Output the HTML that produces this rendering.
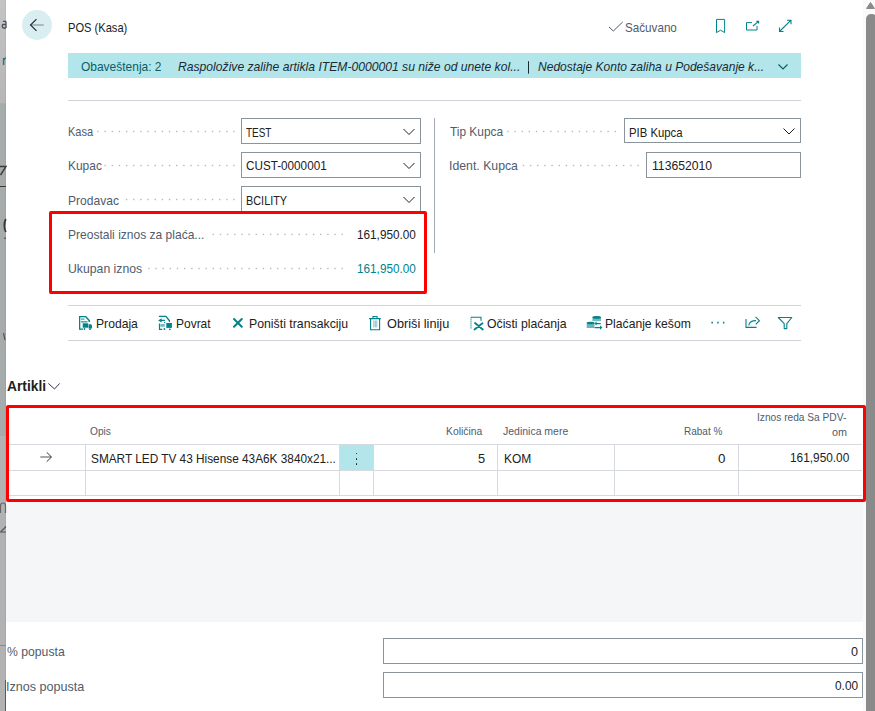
<!DOCTYPE html>
<html><head><meta charset="utf-8">
<style>
html,body{margin:0;padding:0;}
body{width:875px;height:711px;overflow:hidden;position:relative;background:#fff;font-family:"Liberation Sans",sans-serif;color:#212121;}
.a{position:absolute;}
.t{position:absolute;white-space:nowrap;line-height:20px;transform-origin:0 0;}
.inp{position:absolute;box-sizing:border-box;border:1px solid #8a949c;background:#fff;}
.hl{position:absolute;height:1px;}
.vl{position:absolute;width:1px;}
.red{position:absolute;box-sizing:border-box;border:3px solid #ff0000;border-radius:2px;}
</style></head><body>

<!-- left overlay strip -->
<div class="a" style="left:0;top:0;width:6px;height:104px;background:linear-gradient(#c4c4c4,#b6b6b6)"></div>
<div class="a" style="left:0;top:103px;width:6px;height:1px;background:#acacac"></div>
<div class="a" style="left:0;top:104px;width:6px;height:332px;background:#a6acac"></div>
<div class="a" style="left:0;top:436px;width:6px;height:275px;background:#b2b2b2"></div>
<div class="a" style="left:5px;top:0;width:1px;height:711px;background:rgba(0,0,0,0.05)"></div>
<div class="a" style="left:0;top:186px;width:6px;height:1px;background:#3a3a3a"></div>
<div class="a" style="left:0;top:645px;width:6px;height:1px;background:#8a8a8a"></div>
<div class="a" style="left:5px;top:680px;width:1px;height:31px;background:#2b6f73"></div>
<!-- scrollbar -->
<div class="a" style="left:863px;top:0;width:12px;height:711px;background:#fafafa"></div>
<div class="a" style="left:866px;top:14px;width:11px;height:700px;background:#8a8a8a;border-radius:5px 5px 0 0"></div>

<!-- header -->
<div class="a" style="left:22px;top:10px;width:30px;height:30px;border-radius:50%;background:#d8eef0"></div>

<!-- notification bar -->
<div class="a" style="left:68px;top:53px;width:733px;height:25px;background:#b3e6ea"></div>
<div class="hl" style="left:68px;top:100px;width:733px;background:#d0d3d7"></div>

<!-- left form -->
<div class="inp" style="left:241px;top:118px;width:180px;height:26px"></div>
<div class="inp" style="left:241px;top:152px;width:180px;height:26px"></div>
<div class="inp" style="left:241px;top:186px;width:180px;height:26px"></div>
<div class="vl" style="left:434px;top:118px;height:135px;background:#a4abb2"></div>
<!-- right form -->
<div class="inp" style="left:624px;top:118px;width:177px;height:25px"></div>
<div class="inp" style="left:646px;top:152px;width:155px;height:26px"></div>

<div class="red" style="left:49px;top:211px;width:378px;height:83px"></div>

<!-- action bar -->
<div class="hl" style="left:68px;top:305px;width:733px;background:#d0d3d7"></div>
<div class="hl" style="left:68px;top:340px;width:733px;background:#d0d3d7"></div>

<!-- table -->
<div class="a" style="left:340px;top:445px;width:33px;height:25px;background:#b3e6ea"></div>
<div class="hl" style="left:9px;top:444px;width:853px;background:#d6d9dd"></div>
<div class="hl" style="left:9px;top:470px;width:853px;background:#d6d9dd"></div>
<div class="hl" style="left:9px;top:495px;width:853px;background:#d6d9dd"></div>
<div class="vl" style="left:85px;top:444px;height:51px;background:#d6d9dd"></div>
<div class="vl" style="left:339px;top:444px;height:51px;background:#d6d9dd"></div>
<div class="vl" style="left:373px;top:444px;height:51px;background:#d6d9dd"></div>
<div class="vl" style="left:497px;top:444px;height:51px;background:#d6d9dd"></div>
<div class="vl" style="left:614px;top:444px;height:51px;background:#d6d9dd"></div>
<div class="vl" style="left:738px;top:444px;height:51px;background:#d6d9dd"></div>
<div class="a" style="left:355.6px;top:452.6px;width:1.7px;height:1.7px;background:#1a1a1a;border-radius:50%"></div>
<div class="a" style="left:355.6px;top:458px;width:1.7px;height:1.7px;background:#1a1a1a;border-radius:50%"></div>
<div class="a" style="left:355.6px;top:463.3px;width:1.7px;height:1.7px;background:#1a1a1a;border-radius:50%"></div>
<div class="red" style="left:6px;top:405px;width:860px;height:97px"></div>

<!-- grey area -->
<div class="a" style="left:6px;top:502px;width:857px;height:120px;background:#f5f6f7"></div>

<!-- bottom fields -->
<div class="inp" style="left:383px;top:638px;width:480px;height:26px"></div>
<div class="inp" style="left:383px;top:672px;width:480px;height:26px"></div>

<div class="t" style="left:68.00px;top:18.00px;font-size:13px;color:#212121;transform:scaleX(0.8551);">POS (Kasa)</div>
<div class="t" style="left:624.70px;top:17.50px;font-size:13px;color:#505c6d;transform:scaleX(0.8966);">Sačuvano</div>
<div class="t" style="left:80.60px;top:57.00px;font-size:13px;color:#0b5d66;transform:scaleX(0.9205);">Obaveštenja: 2</div>
<div class="t" style="left:177.70px;top:57.00px;font-size:13px;color:#1b2a35;font-style:italic;transform:scaleX(0.9342);">Raspoložive zalihe artikla ITEM-0000001 su niže od unete kol...</div>
<div class="t" style="left:537.50px;top:57.00px;font-size:13px;color:#1b2a35;font-style:italic;transform:scaleX(0.9259);">Nedostaje Konto zaliha u Podešavanje k...</div>
<div class="t" style="left:68.00px;top:122.00px;font-size:13px;color:#505c6d;transform:scaleX(0.8467);">Kasa</div>
<div class="t" style="left:246.00px;top:123.00px;font-size:13px;color:#212121;transform:scaleX(0.7647);">TEST</div>
<div class="t" style="left:68.00px;top:156.00px;font-size:13px;color:#505c6d;transform:scaleX(0.9189);">Kupac</div>
<div class="t" style="left:246.00px;top:156.00px;font-size:13px;color:#212121;transform:scaleX(0.9000);">CUST-0000001</div>
<div class="t" style="left:68.00px;top:190.60px;font-size:13px;color:#505c6d;transform:scaleX(0.9273);">Prodavac</div>
<div class="t" style="left:246.00px;top:190.60px;font-size:13px;color:#212121;transform:scaleX(0.8367);">BCILITY</div>
<div class="t" style="left:68.00px;top:225.00px;font-size:13px;color:#505c6d;transform:scaleX(0.9252);">Preostali iznos za plaća...</div>
<div class="t" style="left:357.20px;top:225.00px;font-size:13px;color:#212121;transform:scaleX(0.9046);">161,950.00</div>
<div class="t" style="left:68.00px;top:259.00px;font-size:13px;color:#505c6d;transform:scaleX(0.9418);">Ukupan iznos</div>
<div class="t" style="left:357.20px;top:259.00px;font-size:13px;color:#00838a;transform:scaleX(0.9046);">161,950.00</div>
<div class="t" style="left:449.60px;top:122.00px;font-size:13px;color:#505c6d;transform:scaleX(0.9138);">Tip Kupca</div>
<div class="t" style="left:628.70px;top:123.00px;font-size:13px;color:#212121;transform:scaleX(0.8710);">PIB Kupca</div>
<div class="t" style="left:448.66px;top:156.00px;font-size:13px;color:#505c6d;transform:scaleX(0.9444);">Ident. Kupca</div>
<div class="t" style="left:651.80px;top:156.00px;font-size:13px;color:#212121;transform:scaleX(0.9375);">113652010</div>
<div class="t" style="left:96.00px;top:313.80px;font-size:13px;color:#212121;transform:scaleX(0.9333);">Prodaja</div>
<div class="t" style="left:176.00px;top:313.80px;font-size:13px;color:#212121;transform:scaleX(0.9211);">Povrat</div>
<div class="t" style="left:249.10px;top:313.80px;font-size:13px;color:#212121;transform:scaleX(0.9457);">Poništi transakciju</div>
<div class="t" style="left:386.80px;top:313.80px;font-size:13px;color:#212121;transform:scaleX(0.9794);">Obriši liniju</div>
<div class="t" style="left:487.20px;top:313.80px;font-size:13px;color:#212121;transform:scaleX(0.9412);">Očisti plaćanja</div>
<div class="t" style="left:604.80px;top:313.80px;font-size:13px;color:#212121;transform:scaleX(0.9348);">Plaćanje kešom</div>
<div class="t" style="left:6.90px;top:375.70px;font-size:14px;color:#212121;font-weight:bold;transform:scaleX(0.9846);">Artikli</div>
<div class="t" style="left:90.30px;top:420.50px;font-size:11px;color:#505c6d;transform:scaleX(0.9217);">Opis</div>
<div class="t" style="left:446.20px;top:420.50px;font-size:11px;color:#505c6d;transform:scaleX(0.9410);">Količina</div>
<div class="t" style="left:502.70px;top:420.50px;font-size:11px;color:#505c6d;transform:scaleX(0.9529);">Jedinica mere</div>
<div class="t" style="left:684.40px;top:420.50px;font-size:11px;color:#505c6d;transform:scaleX(0.9093);">Rabat %</div>
<div class="t" style="left:757.20px;top:407.00px;font-size:11px;color:#505c6d;transform:scaleX(0.9247);">Iznos reda Sa PDV-</div>
<div class="t" style="left:832.30px;top:421.80px;font-size:11px;color:#505c6d;transform:scaleX(0.9800);">om</div>
<div class="t" style="left:91.00px;top:449.00px;font-size:13px;color:#212121;transform:scaleX(0.9086);">SMART LED TV 43 Hisense 43A6K 3840x21...</div>
<div class="t" style="left:477.70px;top:449.00px;font-size:13px;color:#212121;transform:scaleX(0.9857);">5</div>
<div class="t" style="left:504.10px;top:449.00px;font-size:13px;color:#212121;transform:scaleX(0.9207);">KOM</div>
<div class="t" style="left:718.40px;top:449.00px;font-size:13px;color:#212121;transform:scaleX(1.0286);">0</div>
<div class="t" style="left:790.20px;top:448.00px;font-size:13px;color:#212121;transform:scaleX(0.9108);">161,950.00</div>
<div class="t" style="left:6.90px;top:642.00px;font-size:13px;color:#505c6d;transform:scaleX(0.9387);">% popusta</div>
<div class="t" style="left:5.94px;top:677.00px;font-size:13px;color:#505c6d;transform:scaleX(0.9650);">Iznos popusta</div>
<div class="t" style="left:851.30px;top:641.80px;font-size:13px;color:#212121;transform:scaleX(0.9714);">0</div>
<div class="t" style="left:835.20px;top:675.60px;font-size:13px;color:#212121;transform:scaleX(0.9120);">0.00</div>

<svg class="a" style="left:0;top:0" width="875" height="711" viewBox="0 0 875 711">
<!-- scrollbar arrow -->
<path d="M870.5 2.5L874.5 8.5H866.5Z" fill="#8a8a8a" stroke="#8a8a8a" stroke-linejoin="round"/>
<g fill="none" stroke-linecap="butt">
<!-- back arrow -->
<path d="M30.5 25H43.8" stroke="#8a969c" stroke-width="1.2"/>
<path d="M36.5 19.2L30.5 25L36.5 30.8" stroke="#1c2834" stroke-width="1.1"/>
<!-- check -->
<path d="M609 27L613.3 31L622.7 22" stroke="#505c6d" stroke-width="1"/>
<!-- bookmark -->
<path d="M716.5 19.4H724.6V32.6L720.6 30.2L716.5 32.6Z" stroke="#00838a" stroke-width="1"/>
<!-- popout -->
<path d="M752 22.6H746.5V30H757V25.8" stroke="#00838a" stroke-width="1"/>
<path d="M753 26L758.6 21.4M756.4 21.4H758.6V23.6" stroke="#00838a" stroke-width="1.1"/>
<!-- expand -->
<path d="M779.5 31.5L791 20.2M787 20.2H791V24.2M779.5 27.5V31.5H783.5" stroke="#00838a" stroke-width="1.1"/>
<path d="M528.5 61.2V73.7" stroke="#1b2a35" stroke-width="1"/>
<!-- notification chevron -->
<path d="M778.5 64.5L783 69L787.5 64.5" stroke="#0b5d66" stroke-width="1.2"/>
<!-- input chevrons -->
<path d="M403.5 129L409 134.5L414.5 129M403.5 163L409 168.5L414.5 163M403.5 197L409 202.5L414.5 197M783.5 128.5L789 134L794.5 128.5" stroke="#1a2028" stroke-width="1"/>
<!-- artikli chevron -->
<path d="M48.3 383.4L54.5 389L59.7 383.4" stroke="#2e3c4a" stroke-width="1"/>
<!-- row arrow -->
<path d="M40.3 457H51.3" stroke="#707070" stroke-width="1.2"/>
<path d="M46.7 452.3L51.5 457L46.7 461.7" stroke="#3a3030" stroke-width="1"/>
</g>
<!-- action bar icons -->
<g fill="#00838a" stroke="none">
<!-- Prodaja: doc + truck -->
<path d="M79 316H86L90 320.3V322H88.6V321L85.3 317.3H80.3V328.5H83V329.8H79Z"/>
<rect x="81" y="318.3" width="3.5" height="1.6" opacity="0.6"/>
<rect x="81" y="321.3" width="6.5" height="1.1"/>
<rect x="82.7" y="323.3" width="5.5" height="4.4"/>
<path d="M88.6 324.2H91.2L92 325.5V328.4H88.6Z"/>
<circle cx="84.5" cy="329" r="0.9"/><circle cx="90" cy="329.2" r="0.9"/>
<!-- Povrat: doc + arrow + truck -->
<path d="M158.9 315.8H166.2L170 320.3V322H168.8V321L165.6 317H158.9Z"/>
<path d="M158.1 320.4L161.6 318.2V319.8H164.9V321H161.6V322.6Z"/>
<rect x="164.1" y="321.9" width="1.1" height="1.1"/>
<path d="M158.9 323.4H160.1V328.8H162.2V330H158.9Z"/>
<rect x="160.4" y="324" width="4.4" height="2.8" opacity="0.55"/>
<rect x="166.3" y="323" width="5.6" height="4.9"/>
<circle cx="164.4" cy="329" r="0.9"/><circle cx="169.9" cy="329.3" r="0.9"/>
</g>
<g fill="none" stroke="#00838a">
<!-- X -->
<path d="M234 319L241.8 326.8M241.8 319L234 326.8" stroke-width="2" stroke-linecap="round"/>
<!-- trash -->
<path d="M369.1 318.6H380.8M373 318.3V316.5H377V318.3M370.6 318.6V329.8H379.6V318.6" stroke-width="1.1"/>
<path d="M373.8 320.4V327.4M375.3 320.4V327.4M376.8 320.4V327.4" stroke-width="0.9" opacity="0.55"/>
<!-- ocisti -->
<path d="M471 317.3H481V320.7" stroke-width="1.1"/><path d="M471 317.3V328.8" stroke-width="1.2" stroke-dasharray="1.3 0.7" opacity="0.8"/>
<path d="M475 323L482.8 329.5M482.5 323.2L474.5 329.5" stroke-width="1.8" stroke-linecap="round"/>
<!-- dots menu -->
<path d="M711.4 322.6H712.9M717.2 322.6H718.7M722.9 322.6H724.4" stroke-width="1.6"/>
<!-- share -->
<path d="M746 318.9V327.4H756.6" stroke-width="1.1"/>
<path d="M748.7 325.5C749.5 321.5 752.5 320.6 756 320.6M755.6 316.8L759.4 320.7L755.8 324.3" stroke-width="1.1"/>
<!-- filter -->
<path d="M778.3 317.5H791.8L786.8 323.6V328.6H784.2V323.6Z" stroke-width="1.1" stroke-linejoin="round"/>
</g>
<g fill="#00838a">
<!-- cash -->
<ellipse cx="596.7" cy="317.4" rx="4.3" ry="1.3"/>
<rect x="592.4" y="317.4" width="8.6" height="3.8" opacity="0.55"/>
<ellipse cx="590.6" cy="323" rx="3.9" ry="1.2"/>
<rect x="586.7" y="323" width="7.8" height="5" opacity="0.6"/>
<path d="M594.3 323.6L596.6 321.6V323H600.8V324.3H596.6V325.6Z"/>
<path d="M602.4 327.6L600 329.8V328.3H594.6V326.9H600V325.4Z"/>
</g>
<g fill="#b4b9c0"><rect x="233.30" y="130.80" width="1.4" height="1.4"/><rect x="226.14" y="130.80" width="1.4" height="1.4"/><rect x="218.98" y="130.80" width="1.4" height="1.4"/><rect x="211.82" y="130.80" width="1.4" height="1.4"/><rect x="204.66" y="130.80" width="1.4" height="1.4"/><rect x="197.50" y="130.80" width="1.4" height="1.4"/><rect x="190.34" y="130.80" width="1.4" height="1.4"/><rect x="183.18" y="130.80" width="1.4" height="1.4"/><rect x="176.02" y="130.80" width="1.4" height="1.4"/><rect x="168.86" y="130.80" width="1.4" height="1.4"/><rect x="161.70" y="130.80" width="1.4" height="1.4"/><rect x="154.54" y="130.80" width="1.4" height="1.4"/><rect x="147.38" y="130.80" width="1.4" height="1.4"/><rect x="140.22" y="130.80" width="1.4" height="1.4"/><rect x="133.06" y="130.80" width="1.4" height="1.4"/><rect x="125.90" y="130.80" width="1.4" height="1.4"/><rect x="118.74" y="130.80" width="1.4" height="1.4"/><rect x="111.58" y="130.80" width="1.4" height="1.4"/><rect x="104.42" y="130.80" width="1.4" height="1.4"/><rect x="97.26" y="130.80" width="1.4" height="1.4"/><rect x="233.30" y="164.80" width="1.4" height="1.4"/><rect x="226.14" y="164.80" width="1.4" height="1.4"/><rect x="218.98" y="164.80" width="1.4" height="1.4"/><rect x="211.82" y="164.80" width="1.4" height="1.4"/><rect x="204.66" y="164.80" width="1.4" height="1.4"/><rect x="197.50" y="164.80" width="1.4" height="1.4"/><rect x="190.34" y="164.80" width="1.4" height="1.4"/><rect x="183.18" y="164.80" width="1.4" height="1.4"/><rect x="176.02" y="164.80" width="1.4" height="1.4"/><rect x="168.86" y="164.80" width="1.4" height="1.4"/><rect x="161.70" y="164.80" width="1.4" height="1.4"/><rect x="154.54" y="164.80" width="1.4" height="1.4"/><rect x="147.38" y="164.80" width="1.4" height="1.4"/><rect x="140.22" y="164.80" width="1.4" height="1.4"/><rect x="133.06" y="164.80" width="1.4" height="1.4"/><rect x="125.90" y="164.80" width="1.4" height="1.4"/><rect x="118.74" y="164.80" width="1.4" height="1.4"/><rect x="111.58" y="164.80" width="1.4" height="1.4"/><rect x="104.42" y="164.80" width="1.4" height="1.4"/><rect x="233.30" y="198.80" width="1.4" height="1.4"/><rect x="226.14" y="198.80" width="1.4" height="1.4"/><rect x="218.98" y="198.80" width="1.4" height="1.4"/><rect x="211.82" y="198.80" width="1.4" height="1.4"/><rect x="204.66" y="198.80" width="1.4" height="1.4"/><rect x="197.50" y="198.80" width="1.4" height="1.4"/><rect x="190.34" y="198.80" width="1.4" height="1.4"/><rect x="183.18" y="198.80" width="1.4" height="1.4"/><rect x="176.02" y="198.80" width="1.4" height="1.4"/><rect x="168.86" y="198.80" width="1.4" height="1.4"/><rect x="161.70" y="198.80" width="1.4" height="1.4"/><rect x="154.54" y="198.80" width="1.4" height="1.4"/><rect x="147.38" y="198.80" width="1.4" height="1.4"/><rect x="140.22" y="198.80" width="1.4" height="1.4"/><rect x="133.06" y="198.80" width="1.4" height="1.4"/><rect x="125.90" y="198.80" width="1.4" height="1.4"/><rect x="341.50" y="233.70" width="1.4" height="1.4"/><rect x="334.34" y="233.70" width="1.4" height="1.4"/><rect x="327.18" y="233.70" width="1.4" height="1.4"/><rect x="320.02" y="233.70" width="1.4" height="1.4"/><rect x="312.86" y="233.70" width="1.4" height="1.4"/><rect x="305.70" y="233.70" width="1.4" height="1.4"/><rect x="298.54" y="233.70" width="1.4" height="1.4"/><rect x="291.38" y="233.70" width="1.4" height="1.4"/><rect x="284.22" y="233.70" width="1.4" height="1.4"/><rect x="277.06" y="233.70" width="1.4" height="1.4"/><rect x="269.90" y="233.70" width="1.4" height="1.4"/><rect x="262.74" y="233.70" width="1.4" height="1.4"/><rect x="255.58" y="233.70" width="1.4" height="1.4"/><rect x="248.42" y="233.70" width="1.4" height="1.4"/><rect x="241.26" y="233.70" width="1.4" height="1.4"/><rect x="234.10" y="233.70" width="1.4" height="1.4"/><rect x="226.94" y="233.70" width="1.4" height="1.4"/><rect x="219.78" y="233.70" width="1.4" height="1.4"/><rect x="212.62" y="233.70" width="1.4" height="1.4"/><rect x="341.50" y="267.80" width="1.4" height="1.4"/><rect x="334.34" y="267.80" width="1.4" height="1.4"/><rect x="327.18" y="267.80" width="1.4" height="1.4"/><rect x="320.02" y="267.80" width="1.4" height="1.4"/><rect x="312.86" y="267.80" width="1.4" height="1.4"/><rect x="305.70" y="267.80" width="1.4" height="1.4"/><rect x="298.54" y="267.80" width="1.4" height="1.4"/><rect x="291.38" y="267.80" width="1.4" height="1.4"/><rect x="284.22" y="267.80" width="1.4" height="1.4"/><rect x="277.06" y="267.80" width="1.4" height="1.4"/><rect x="269.90" y="267.80" width="1.4" height="1.4"/><rect x="262.74" y="267.80" width="1.4" height="1.4"/><rect x="255.58" y="267.80" width="1.4" height="1.4"/><rect x="248.42" y="267.80" width="1.4" height="1.4"/><rect x="241.26" y="267.80" width="1.4" height="1.4"/><rect x="234.10" y="267.80" width="1.4" height="1.4"/><rect x="226.94" y="267.80" width="1.4" height="1.4"/><rect x="219.78" y="267.80" width="1.4" height="1.4"/><rect x="212.62" y="267.80" width="1.4" height="1.4"/><rect x="205.46" y="267.80" width="1.4" height="1.4"/><rect x="198.30" y="267.80" width="1.4" height="1.4"/><rect x="191.14" y="267.80" width="1.4" height="1.4"/><rect x="183.98" y="267.80" width="1.4" height="1.4"/><rect x="176.82" y="267.80" width="1.4" height="1.4"/><rect x="169.66" y="267.80" width="1.4" height="1.4"/><rect x="162.50" y="267.80" width="1.4" height="1.4"/><rect x="155.34" y="267.80" width="1.4" height="1.4"/><rect x="148.18" y="267.80" width="1.4" height="1.4"/><rect x="614.60" y="130.80" width="1.4" height="1.4"/><rect x="607.44" y="130.80" width="1.4" height="1.4"/><rect x="600.28" y="130.80" width="1.4" height="1.4"/><rect x="593.12" y="130.80" width="1.4" height="1.4"/><rect x="585.96" y="130.80" width="1.4" height="1.4"/><rect x="578.80" y="130.80" width="1.4" height="1.4"/><rect x="571.64" y="130.80" width="1.4" height="1.4"/><rect x="564.48" y="130.80" width="1.4" height="1.4"/><rect x="557.32" y="130.80" width="1.4" height="1.4"/><rect x="550.16" y="130.80" width="1.4" height="1.4"/><rect x="543.00" y="130.80" width="1.4" height="1.4"/><rect x="535.84" y="130.80" width="1.4" height="1.4"/><rect x="528.68" y="130.80" width="1.4" height="1.4"/><rect x="521.52" y="130.80" width="1.4" height="1.4"/><rect x="514.36" y="130.80" width="1.4" height="1.4"/><rect x="507.20" y="130.80" width="1.4" height="1.4"/><rect x="637.30" y="164.80" width="1.4" height="1.4"/><rect x="630.14" y="164.80" width="1.4" height="1.4"/><rect x="622.98" y="164.80" width="1.4" height="1.4"/><rect x="615.82" y="164.80" width="1.4" height="1.4"/><rect x="608.66" y="164.80" width="1.4" height="1.4"/><rect x="601.50" y="164.80" width="1.4" height="1.4"/><rect x="594.34" y="164.80" width="1.4" height="1.4"/><rect x="587.18" y="164.80" width="1.4" height="1.4"/><rect x="580.02" y="164.80" width="1.4" height="1.4"/><rect x="572.86" y="164.80" width="1.4" height="1.4"/><rect x="565.70" y="164.80" width="1.4" height="1.4"/><rect x="558.54" y="164.80" width="1.4" height="1.4"/><rect x="551.38" y="164.80" width="1.4" height="1.4"/><rect x="544.22" y="164.80" width="1.4" height="1.4"/><rect x="537.06" y="164.80" width="1.4" height="1.4"/><rect x="529.90" y="164.80" width="1.4" height="1.4"/><rect x="522.74" y="164.80" width="1.4" height="1.4"/></g>
<g fill="none" stroke-width="1.3">
<path d="M3 21.3H6M6 21.3V28M6 24.5H3.2Q2.2 24.5 2.2 26.2Q2.2 28 3.5 28H6" stroke="#4a5260"/>
<path d="M3.6 58V65M3.6 60.5Q4.5 58 6 58" stroke="#2b7a7f" stroke-width="1.5"/>
<path d="M0 166.5H6L0.5 175" stroke="#3a3a3a" stroke-width="1.4"/>
<path d="M5.8 219Q2.8 225.3 5.8 232" stroke="#3a3a3a" stroke-width="1.8"/>
<path d="M5 237.5V239" stroke="#3a3a3a" stroke-width="1.2"/>
<path d="M3.5 333L5 340" stroke="#555" stroke-width="1.2"/>
<path d="M0.5 513V506Q0.5 503 3 503Q5.5 503 5.5 506V513" stroke="#666" stroke-width="1.2"/>
<path d="M6 526.5L0.5 532H6" stroke="#555" stroke-width="1.1"/>
</g>
</svg>
</body></html>
